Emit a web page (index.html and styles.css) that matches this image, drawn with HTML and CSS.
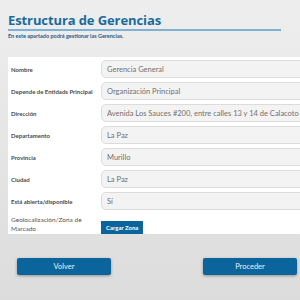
FILE: index.html
```html
<!DOCTYPE html>
<html lang="es">
<head>
    <meta charset="UTF-8">
    <meta name="viewport" content="width=device-width, initial-scale=1.0">
    <title>Estructura de Gerencias</title>
    <link rel="stylesheet" href="styles.css">
</head>
<body>

    <header class="page-header">
        <h1>Estructura de Gerencias</h1>
        <p>En este apartado podrá gestionar las Gerencias.</p>
    </header>

    <main>
        <!-- Datos de la gerencia -->
        <form class="form-card">
            <div class="form-row">
                <label>Nombre</label>
                <input type="text" value="Gerencia General">
            </div>
            <div class="form-row">
                <label>Depende de Entidads Principal</label>
                <input type="text" value="Organización Principal">
            </div>
            <div class="form-row">
                <label>Dirección</label>
                <input type="text" value="Avenida Los Sauces #200, entre calles 13 y 14 de Calacoto">
            </div>
            <div class="form-row">
                <label>Departamento</label>
                <input type="text" value="La Paz">
            </div>
            <div class="form-row">
                <label>Provincia</label>
                <input type="text" value="Murillo">
            </div>
            <div class="form-row">
                <label>Ciudad</label>
                <input type="text" value="La Paz">
            </div>
            <div class="form-row">
                <label>Está abierta/disponible</label>
                <input type="text" value="Sí">
            </div>
            <div class="form-row geo-row">
                <label class="light">Geolocalización/Zona de Marcado</label>
                <div><button type="button" class="btn-small">Cargar Zona</button></div>
            </div>
        </form>

        <div class="actions">
            <button class="btn">Volver</button>
            <button class="btn">Proceder</button>
        </div>
    </main>

</body>
</html>
```

FILE: styles.css
```css
html, body {
    height: 100%;
}

body {
    margin: 0;
    padding: 13px 0 0 8px;
    box-sizing: border-box;
    overflow: hidden;
    font-family: Lato, "Open Sans", sans-serif;
    background: linear-gradient(#eeeeee, #dcdcdc);
}

/* Title */
.page-header {
    width: 273px;
}

.page-header h1 {
    margin: 0;
    padding-bottom: 1px;
    font-family: "Open Sans", sans-serif;
    font-size: 13px;
    line-height: 15px;
    letter-spacing: -0.1px;
    color: #1a6b9c;
    border-bottom: 2px solid #80b1d2;
}

.page-header p {
    margin: 2px 0 0;
    font-size: 5.5px;
    font-weight: bold;
    color: #1b5c8a;
}

/* Form card */
.form-card {
    margin-top: 18px;
    width: 310px;
    padding: 3px 0 0 3px;
    background: #fff;
    box-sizing: border-box;
}

.form-row {
    display: grid;
    grid-template-columns: 90px 1fr;
    align-items: center;
    margin-bottom: 4px;
}

.form-row label {
    font-size: 6px;
    font-weight: bold;
    color: #4a4a4a;
}

.form-row label.light {
    font-weight: normal;
    font-size: 6.5px;
    line-height: 9px;
    color: #555;
    padding-right: 4px;
}

.form-row input {
    height: 18px;
    box-sizing: border-box;
    padding: 0 5px;
    border: 1px solid #dcdcdc;
    border-radius: 5px;
    background: #f3f3f3;
    font-family: Lato, sans-serif;
    font-size: 7.5px;
    color: #707070;
}

.geo-row {
    margin: 0;
}

.btn-small {
    height: 13px;
    padding: 0 5px;
    border: none;
    background: #0b659c;
    color: #fff;
    font-family: Lato, sans-serif;
    font-size: 6px;
    font-weight: bold;
}

/* Bottom buttons */
.actions {
    display: flex;
    justify-content: space-between;
    width: 289px;
    margin-top: 24px;
    padding-left: 9px;
    box-sizing: border-box;
}

.btn {
    width: 94px;
    height: 17px;
    border: none;
    border-radius: 2px;
    background: #0b659c;
    color: #e8f0f6;
    font-family: Lato, sans-serif;
    font-size: 7.5px;
    box-shadow: 0 1px 3px rgba(0, 0, 0, 0.35);
}
```
